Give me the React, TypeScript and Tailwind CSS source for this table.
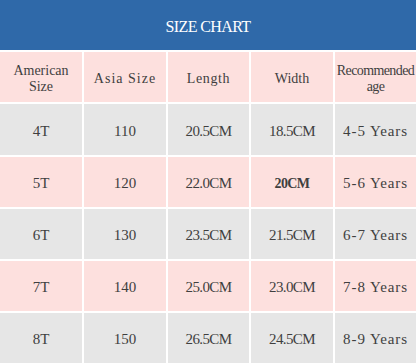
import React from 'react';

const headers = [
  { lines: ['American', 'Size'], cls: '' },
  { lines: ['Asia Size'], cls: 'tracking-[1px]' },
  { lines: ['Length'], cls: 'tracking-[0.6px]' },
  { lines: ['Width'], cls: '' },
  { lines: ['Recommended', 'age'], cls: 'tracking-[-0.6px]' },
];

const rows = [
  { us: '4T', asia: '110', length: '20.5CM', width: '18.5CM', age: '4-5 Years' },
  { us: '5T', asia: '120', length: '22.0CM', width: '20CM', age: '5-6 Years' },
  { us: '6T', asia: '130', length: '23.5CM', width: '21.5CM', age: '6-7 Years' },
  { us: '7T', asia: '140', length: '25.0CM', width: '23.0CM', age: '7-8 Years' },
  { us: '8T', asia: '150', length: '26.5CM', width: '24.5CM', age: '8-9 Years' },
];

const cell = "flex items-center justify-center pt-[3px] font-['Liberation_Serif',serif]";

export default function App() {
  return (
    <div className="w-[416px] h-[363px] bg-white overflow-hidden text-[#3f3f3f]">
      <div className="h-[50px] bg-[#2f69a9] flex items-center justify-center pt-[3px]">
        <h1 className="font-['Liberation_Serif',serif] text-[16px] tracking-[-0.6px] text-white">SIZE CHART</h1>
      </div>

      <div className="mt-[2px] grid grid-cols-[82px_82px_81px_82px_81px] gap-x-[2px] gap-y-[2px]">
        {headers.map((hd, i) => (
          <div
            key={i}
            className={`h-[50px] bg-[#fde0de] flex flex-col items-center justify-center pt-[3px] font-['Liberation_Serif',serif] text-[14px] leading-[16px] ${hd.cls}`}
          >
            {hd.lines.map((l) => (
              <span key={l}>{l}</span>
            ))}
          </div>
        ))}

        {rows.map((r, i) => {
          const bg = i % 2 === 0 ? 'bg-[#e6e6e6]' : 'bg-[#fde0de]';
          const h = i === 0 ? 'h-[51px]' : 'h-[50px]';
          return (
            <React.Fragment key={r.us}>
              <div className={`${h} ${bg} ${cell} text-[15px]`}>{r.us}</div>
              <div className={`${h} ${bg} ${cell} text-[15px]`}>{r.asia}</div>
              <div className={`${h} ${bg} ${cell} text-[15px] tracking-[-0.6px]`}>{r.length}</div>
              <div
                className={`${h} ${bg} ${cell} ${
                  r.width === '20CM' ? 'text-[14px] font-bold tracking-[-0.6px]' : 'text-[15px] tracking-[-0.6px]'
                }`}
              >
                {r.width}
              </div>
              <div className={`${h} ${bg} ${cell} text-[15px] tracking-[0.9px]`}>{r.age}</div>
            </React.Fragment>
          );
        })}
      </div>
    </div>
  );
}
